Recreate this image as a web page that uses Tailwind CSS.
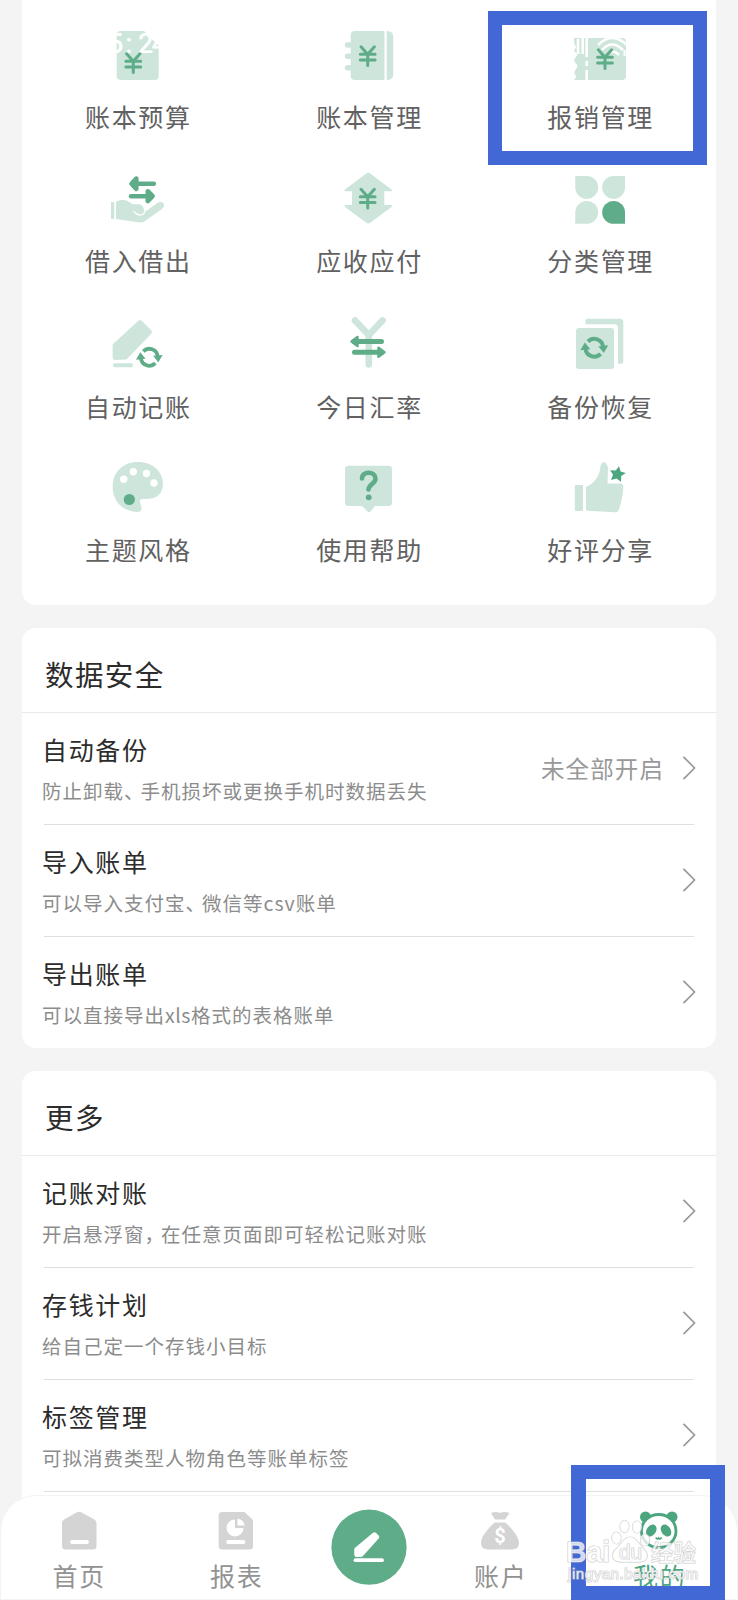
<!DOCTYPE html>
<html lang="zh-CN">
<head>
<meta charset="utf-8">
<title>我的</title>
<script src="https://cdn.jsdelivr.net/npm/@tailwindcss/browser@4"></script>
</head>
<body class="bg-[#f4f4f4]">
<svg class="hidden">
  <defs>
    <g id="yen" fill="none" stroke="#5fac89" stroke-width="3" stroke-linecap="round" stroke-linejoin="round"><path d="M-6.7 1.8L0 9.2L6.7 1.8M0 9.2V20.6M-7.4 9.2H7.4M-7.4 15H7.4"/></g>
    <g id="sync"><path d="M-6.3 -6.2A8.8 8.8 0 0 1 8.8 -1M6.3 6.2A8.8 8.8 0 0 1 -8.8 1" fill="none" stroke="#5fac89" stroke-width="4"/><path d="M4 -1.500L14 -2.500L9.500 5.200ZM-4 1.500L-14 2.500L-9.500 -5.200Z" fill="#5fac89"/></g>
  </defs>
</svg>
<div class="relative h-[1600px] w-[738px] overflow-hidden bg-[#f4f4f4] font-['Noto_Sans_CJK_SC',sans-serif]">
  <main class="flex flex-col gap-[23px] pl-[22px] pr-[22.5px]">
    <section class="h-[605px] rounded-b-[14px] bg-white pt-6">
      <div class="grid grid-cols-3 text-[25px] leading-[30px] tracking-[1.65px] text-[#616161]">
        <div class="flex h-36 flex-col items-center gap-[13px]">
          <svg class="size-16" viewBox="106 24 64 64"><path d="M121 31H144L158.700 46V76Q158.700 80 154.700 80H121Q116.700 80 116.700 76V35Q116.700 31 121 31Z" fill="#cde5db"/><text x="108 125.300 138 151.500" y="52.500" font-family="Roboto" font-size="27" font-weight="500" fill="#fff">5:24</text><use href="#yen" x="133.300" y="52"/></svg>
          <span class="pl-[1.500px]">账本预算</span>
        </div>
        <div class="flex h-36 flex-col items-center gap-[13px]">
          <svg class="size-16" viewBox="337 24 64 64" fill="#cde5db"><path d="M355 31H384.500V80H355Q350.700 80 350.700 76V35Q350.700 31 355 31ZM386.700 31Q393.300 31 393.300 37V74Q393.300 80 386.700 80Z"/><path d="M347.500 45H352M347.500 56.300H352M347.500 67.800H352" stroke="#cde5db" stroke-width="5.500" stroke-linecap="round"/><use href="#yen" x="367.700" y="45"/></svg>
          <span class="pl-[1.500px]">账本管理</span>
        </div>
        <div class="flex h-36 flex-col items-center gap-[13px]">
          <svg class="size-16" viewBox="568 24 64 64"><path d="M574 38H622Q626 38 626 42V76Q626 80 622 80H574Q577 77 575.500 75Q573 72.500 576 69Q579 66 575.500 63Q573 60 576 57Q579 54 574 51L576 47L574 43Z" fill="#cde5db"/><path d="M578 39V54M582.700 38V54" stroke="#fff" stroke-width="2.600"/><path d="M586.700 37V81" stroke="#fff" stroke-width="2.600"/><path d="M586.500 57V61M586.500 66V70" stroke="#cde5db" stroke-width="3"/><g fill="none" stroke="#fff"><path d="M598 45Q612 31 627 45" stroke-width="2.500"/><path d="M602 50Q612 39 623 50" stroke-width="2.500"/><path d="M607 55Q612.500 48 619 55" stroke-width="2.500"/><path d="M624.500 50V56" stroke-width="2"/></g><use href="#yen" x="605" y="48"/></svg>
          <span class="pl-[1.500px]">报销管理</span>
        </div>
        <div class="flex h-36 flex-col items-center gap-[13px]">
          <svg class="size-16" viewBox="106 168 64 64"><path d="M111 202H114.300V219H111ZM116 202Q122 198.500 127 201L133 204.500H139Q143.500 205 143.500 209Q142 212 137.500 211.500L133.500 210.500Q140 216 145 212L158 202.500Q162 201 164 204Q164.500 207 162 209L145 221Q143 222.500 140 222.500L116 219Z" fill="#cde5db"/><path d="M116 202Q122 198.500 127 201L133 204.500H140L146 211L140 217L116 219Z" fill="#cde5db"/><path d="M133.500 211Q139 217.500 144 213.500Q145.500 211 144 207.500" fill="none" stroke="#fff" stroke-width="1.200"/><path d="M153.800 183.700H132M136.300 178.500L131.500 183.700L136.300 188.800ZM131 196.200H152M147.800 191.200L152.600 196.200L147.800 201Z" fill="#5fac89" stroke="#5fac89" stroke-width="4.600" stroke-linecap="round" stroke-linejoin="round"/></svg>
          <span class="pl-[1.500px]">借入借出</span>
        </div>
        <div class="flex h-36 flex-col items-center gap-[13px]">
          <svg class="size-16" viewBox="337 168 64 64"><path d="M366 173.700Q368.300 172 370.600 173.700L391.500 189.500Q393 191.300 390.500 191.300H384.300V205H390.500Q393 205 391.500 207L370.600 222.500Q368.300 224.200 366 222.500L345 207Q343.500 205 346 205H352V191.300H346Q343.500 191.300 345 189.500Z" fill="#cde5db"/><use href="#yen" x="367.700" y="187.500"/></svg>
          <span class="pl-[1.500px]">应收应付</span>
        </div>
        <div class="flex h-36 flex-col items-center gap-[13px]">
          <svg class="size-16" viewBox="568 168 64 64" fill="#cde5db"><path d="M575.300 176H586.700A11.400 11.400 0 1 1 575.300 187.400ZM625 176H613.600A11.400 11.400 0 1 0 625 187.400ZM575.300 223.800H586.700A11.400 11.400 0 1 0 575.300 212.400Z"/><path d="M625 223.800H613.600A11.400 11.400 0 1 1 625 212.400Z" fill="#5fac89"/></svg>
          <span class="pl-[1.500px]">分类管理</span>
        </div>
        <div class="flex h-36 flex-col items-center gap-[15px]">
          <svg class="size-16" viewBox="106 312 64 64"><path d="M115 345.500L140 322.500L149.500 332L125.500 357L115 357.500Z" fill="#cde5db" stroke="#cde5db" stroke-width="4.800" stroke-linejoin="round"/><path d="M114.800 365.200H131" stroke="#cde5db" stroke-width="4" stroke-linecap="round"/><use href="#sync" transform="translate(149.300 357.300) scale(.95)"/></svg>
          <span class="pl-[1.500px]">自动记账</span>
        </div>
        <div class="flex h-36 flex-col items-center gap-[15px]">
          <svg class="size-16" viewBox="337 312 64 64" fill="none" stroke-linecap="round" stroke-linejoin="round"><path d="M355 320.500L368.800 335L382.500 320.500M368.800 335V364.500" stroke="#cde5db" stroke-width="6.600"/><path d="M381.500 341.500H354M354.500 352.200H382" stroke="#5fac89" stroke-width="5"/><path d="M357.500 337L351.500 341.500L357.500 346ZM378.500 347.700L384.500 352.200L378.500 356.700Z" fill="#5fac89" stroke="#5fac89" stroke-width="2.500"/></svg>
          <span class="pl-[1.500px]">今日汇率</span>
        </div>
        <div class="flex h-36 flex-col items-center gap-[15px]">
          <svg class="size-16" viewBox="568 312 64 64" fill="#cde5db"><path d="M588 318.700H620Q623.300 318.700 623.300 322V362Q623 363.800 621 363.800H618V328Q618 324.300 614.500 324.300H585.500V321Q585.500 318.700 588 318.700Z"/><rect x="576" y="328" width="38" height="41" rx="3"/><use href="#sync" x="594.300" y="347.700"/></svg>
          <span class="pl-[1.500px]">备份恢复</span>
        </div>
        <div class="flex h-36 flex-col items-center gap-[14px]">
          <svg class="size-16" viewBox="106 456 64 64"><path d="M138 462C152 462 163 471 163 484C163 494 156 499 147 499H143Q139.500 499 140 502C140.500 505 142 507 141.500 509Q141 512 137 512C122 511 112.700 501 112.700 487C112.700 472 123 462 138 462Z" fill="#cde5db"/><g fill="#fff"><circle cx="123.700" cy="479.200" r="3.700"/><circle cx="133.300" cy="471.700" r="3.700"/><circle cx="146.500" cy="473.500" r="3.700"/><circle cx="154" cy="483" r="3.700"/></g><circle cx="129.300" cy="499.500" r="5.600" fill="#5fac89"/></svg>
          <span class="pl-[1.500px]">主题风格</span>
        </div>
        <div class="flex h-36 flex-col items-center gap-[14px]">
          <svg class="size-16" viewBox="337 456 64 64"><path d="M348.500 465.700H388.500Q392 465.700 392 469V502.500Q392 506 388.500 506H375L370.500 511.500Q369 513 367.500 511.500L362 506H348.500Q345 506 345 502.500V469Q345 465.700 348.500 465.700Z" fill="#cde5db"/><path d="M362 478.500C362 470.500 375.500 471 375.500 478.800C375.500 483.500 368.500 484.500 368.500 489.500" fill="none" stroke="#5fac89" stroke-width="4.600" stroke-linecap="round"/><circle cx="368.700" cy="497.300" r="2.900" fill="#5fac89"/></svg>
          <span class="pl-[1.500px]">使用帮助</span>
        </div>
        <div class="flex h-36 flex-col items-center gap-[14px]">
          <svg class="size-16" viewBox="568 456 64 64" fill="#cde5db"><path d="M576 485H583V511H576Q574.800 511 574.800 510V486Q575 485 576 485ZM586 487C593 484 600 477 600.500 466Q601.500 461.500 605 462.500Q608 465 608 469L607.500 483.500H620Q623.500 483.500 623.300 487C623 495 621 503 619 509.500Q618 512.500 615 512.300L588 510.800Q586 510.500 586 509Z"/><path d="M619 466.200L620.600 471.600L625.800 473L621.200 476L621 481.700L616.500 478.500L611 480L613 474.800L610.200 470.200L615.800 470.500Z" fill="#4ba57e"/></svg>
          <span class="pl-[1.500px]">好评分享</span>
        </div>
      </div>
    </section>

    <section class="h-[420px] rounded-[14px] bg-white">
      <h2 class="flex h-[85px] items-center border-b border-[#e9e9e9] pl-[23px] pt-[7px] text-[28.500px] leading-9 tracking-[1.400px] text-[#2c2c2c]">数据安全</h2>
      <div class="mx-[22px] flex h-28 items-center justify-between border-b border-[#dfdfdf]">
        <div class="-ml-[2px] flex flex-col gap-[14px]">
          <h3 class="text-[25px] leading-[30px] tracking-[1.650px] text-[#2c2c2c]">自动备份</h3>
          <p class="text-[19.500px] leading-[26px] tracking-[1px] text-[#8c8c8c]">防止卸载<span class="-mr-[4px]">、</span>手机损坏或更换手机时数据丢失</p>
        </div>
        <div class="-mr-[2.500px] flex items-center gap-[18px] pb-px"><span class="pb-[1px] text-[23.500px] leading-[30px] tracking-[1.100px] text-[#999]">未全部开启</span><svg class="h-6 w-[14px]" viewBox="0 0 14 24" fill="none" stroke="#999" stroke-width="1.700"><path d="M1.500 .8L12.500 12L1.500 23.200"/></svg></div>
      </div>
      <div class="mx-[22px] flex h-28 items-center justify-between border-b border-[#dfdfdf]">
        <div class="-ml-[2px] flex flex-col gap-[14px]">
          <h3 class="text-[25px] leading-[30px] tracking-[1.650px] text-[#2c2c2c]">导入账单</h3>
          <p class="text-[19.500px] leading-[26px] tracking-[1px] text-[#8c8c8c]">可以导入支付宝<span class="-mr-[4px]">、</span>微信等csv账单</p>
        </div>
        <svg class="-mr-[2.500px] mb-0.5 h-6 w-[14px]" viewBox="0 0 14 24" fill="none" stroke="#999" stroke-width="1.700"><path d="M1.500 .8L12.500 12L1.500 23.200"/></svg>
      </div>
      <div class="mx-[22px] flex h-[111px] items-center justify-between">
        <div class="-ml-[2px] flex flex-col gap-[14px]">
          <h3 class="text-[25px] leading-[30px] tracking-[1.650px] text-[#2c2c2c]">导出账单</h3>
          <p class="text-[19.500px] leading-[26px] tracking-[1px] text-[#8c8c8c]">可以直接导出<span class="tracking-[.5px]">xls</span>格式的表格账单</p>
        </div>
        <svg class="-mr-[2.500px] mb-0.5 h-6 w-[14px]" viewBox="0 0 14 24" fill="none" stroke="#999" stroke-width="1.700"><path d="M1.500 .8L12.500 12L1.500 23.200"/></svg>
      </div>
    </section>

    <section class="h-[540px] rounded-t-[14px] bg-white">
      <h2 class="flex h-[85px] items-center border-b border-[#e9e9e9] pl-[23px] pt-[7px] text-[28.500px] leading-9 tracking-[1.400px] text-[#2c2c2c]">更多</h2>
      <div class="mx-[22px] flex h-28 items-center justify-between border-b border-[#dfdfdf]">
        <div class="-ml-[2px] flex flex-col gap-[14px]">
          <h3 class="text-[25px] leading-[30px] tracking-[1.650px] text-[#2c2c2c]">记账对账</h3>
          <p class="text-[19.500px] leading-[26px] tracking-[1px] text-[#8c8c8c]">开启悬浮窗<span class="-mr-[4px]">，</span>在任意页面即可轻松记账对账</p>
        </div>
        <svg class="-mr-[2.500px] mb-0.5 h-6 w-[14px]" viewBox="0 0 14 24" fill="none" stroke="#999" stroke-width="1.700"><path d="M1.500 .8L12.500 12L1.500 23.200"/></svg>
      </div>
      <div class="mx-[22px] flex h-28 items-center justify-between border-b border-[#dfdfdf]">
        <div class="-ml-[2px] flex flex-col gap-[14px]">
          <h3 class="text-[25px] leading-[30px] tracking-[1.650px] text-[#2c2c2c]">存钱计划</h3>
          <p class="text-[19.500px] leading-[26px] tracking-[1px] text-[#8c8c8c]">给自己定一个存钱小目标</p>
        </div>
        <svg class="-mr-[2.500px] mb-0.5 h-6 w-[14px]" viewBox="0 0 14 24" fill="none" stroke="#999" stroke-width="1.700"><path d="M1.500 .8L12.500 12L1.500 23.200"/></svg>
      </div>
      <div class="mx-[22px] flex h-28 items-center justify-between border-b border-[#dfdfdf]">
        <div class="-ml-[2px] flex flex-col gap-[14px]">
          <h3 class="text-[25px] leading-[30px] tracking-[1.650px] text-[#2c2c2c]">标签管理</h3>
          <p class="text-[19.500px] leading-[26px] tracking-[1px] text-[#8c8c8c]">可拟消费类型人物角色等账单标签</p>
        </div>
        <svg class="-mr-[2.500px] mb-0.5 h-6 w-[14px]" viewBox="0 0 14 24" fill="none" stroke="#999" stroke-width="1.700"><path d="M1.500 .8L12.500 12L1.500 23.200"/></svg>
      </div>
    </section>
  </main>

  <nav class="absolute bottom-0 left-0 grid h-[105px] w-[738px] grid-cols-[155px_160px_103px_160px_158px] rounded-t-[36px] border border-[#f3f3f3] bg-white text-[25px] leading-[30px] tracking-[1.650px] text-[#929292]">
    <div class="flex flex-col items-center gap-[5px] pt-[11px]">
      <svg class="h-12 w-12" viewBox="54.500 1507 48 48"><path d="M76 1512.500Q78.500 1511 81 1512.500L94 1519.500Q96 1521 96 1523V1546Q96 1549.500 92.500 1549.500H65Q61.500 1549.500 61.500 1546V1523Q61.500 1521 63.500 1519.500Z" fill="#d4d4d4"/><path d="M71.500 1542H86.500" stroke="#fff" stroke-width="3.800" stroke-linecap="round"/></svg>
      <span class="pl-[1.500px]">首页</span>
    </div>
    <div class="flex flex-col items-center gap-[5px] pt-[11px]">
      <svg class="h-12 w-12" viewBox="213 1507 48 48"><path d="M223 1512H245.500L254 1520V1546Q254 1549.500 250.500 1549.500H223Q219.700 1549.500 219.700 1546V1515.500Q219.700 1512 223 1512Z" fill="#d4d4d4"/><path d="M236 1519.500A8.500 8.500 0 1 0 244.500 1528H236Z" fill="#fff"/><path d="M238.500 1518.500V1525.500H245.500A7.500 7.500 0 0 0 238.500 1518.500Z" fill="#fff"/><path d="M229 1542H244.500" stroke="#fff" stroke-width="3.800" stroke-linecap="round"/></svg>
      <span class="pl-[1.500px]">报表</span>
    </div>
    <div class="flex justify-center pl-0.5 pt-[13px]">
      <svg class="size-[76px]" viewBox="330.500 1509 76 76"><circle cx="368.500" cy="1547.200" r="37.600" fill="#5fac89"/><path d="M356 1549.500L374 1534.500L376.500 1537L360.500 1554.800H356Z" fill="#fff" stroke="#fff" stroke-width="4.500" stroke-linejoin="round"/><path d="M355 1560.200H381.500" stroke="#fff" stroke-width="3.800" stroke-linecap="round"/></svg>
    </div>
    <div class="flex flex-col items-center gap-[5px] pl-0.5 pt-[11px]">
      <svg class="h-12 w-12" viewBox="476 1507 48 48"><path d="M491 1513Q496 1511 500 1513Q504 1511 509.500 1513L505 1519.500H495ZM494.500 1522.500H505.500C511 1528 519 1536 519 1543Q519 1549.500 512 1549.500H488Q481 1549.500 481 1543C481 1536 489 1528 494.500 1522.500Z" fill="#d4d4d4"/><text x="500" y="1543" text-anchor="middle" font-family="Roboto" font-size="20" font-weight="700" fill="#fff" letter-spacing="0">$</text></svg>
      <span class="pl-[1.500px]">账户</span>
    </div>
    <div class="flex flex-col items-center gap-[5px] pl-0.5 pt-[11px] text-[#4ba57e]">
      <svg class="h-12 w-12" viewBox="635 1507 48 48"><g fill="#4ba57e"><circle cx="645.500" cy="1517" r="5.500"/><circle cx="672" cy="1517" r="5.500"/></g><ellipse cx="658.700" cy="1531" rx="17.300" ry="16.500" fill="#fff" stroke="#4ba57e" stroke-width="2.800"/><g fill="#4ba57e"><ellipse cx="651.300" cy="1530.500" rx="4.600" ry="6.500" transform="rotate(35 651.300 1530.500)"/><ellipse cx="666" cy="1530.500" rx="4.600" ry="6.500" transform="rotate(-35 666 1530.500)"/></g><path d="M655.800 1537.500Q657.500 1540 658.700 1538Q660 1540 661.600 1537.500" fill="none" stroke="#4ba57e" stroke-width="1.600"/></svg>
      <span class="pl-[1.500px]">我的</span>
    </div>
  </nav>

  <!-- highlight frames -->
  <div class="absolute left-[488px] top-[11px] h-[154px] w-[219px] border-[14px] border-[#4168d5]"></div>
  <div class="absolute left-[571px] top-[1465px] h-[135px] w-[154px] border-x-[15px] border-y-[14px] border-[#4168d5]"></div>

  <!-- watermark -->
  <svg class="absolute left-[560px] top-[1510px] h-[90px] w-[150px]" viewBox="560 1510 150 90" font-family="'Liberation Sans','Noto Sans CJK SC',sans-serif" fill="#fff" fill-opacity=".75" stroke="#c4c4c4" stroke-opacity=".8" stroke-width="1.200" paint-order="stroke">
    <ellipse cx="616.500" cy="1538" rx="4.500" ry="6"/><ellipse cx="624.500" cy="1526.500" rx="4.500" ry="6"/><ellipse cx="637" cy="1527" rx="4.500" ry="6"/><ellipse cx="645" cy="1540" rx="4.500" ry="6"/>
    <path d="M630 1537C636 1537 638 1543 643 1548Q650 1555 646 1559.500Q642 1563 630.500 1562Q618 1563 614 1559.500Q610 1554 617 1548C622 1543 624 1537 630 1537Z"/>
    <text x="566" y="1561.500" font-size="29" font-weight="700" textLength="44" lengthAdjust="spacingAndGlyphs">Bai</text>
    <text x="619" y="1559" font-size="20" textLength="23" lengthAdjust="spacingAndGlyphs">du</text>
    <text x="651" y="1560.500" font-size="23" font-weight="500" textLength="45" lengthAdjust="spacingAndGlyphs">经验</text>
    <text x="568" y="1579" font-size="15" textLength="130" lengthAdjust="spacing">jingyan.baidu.com</text>
  </svg>
</div>
</body>
</html>
